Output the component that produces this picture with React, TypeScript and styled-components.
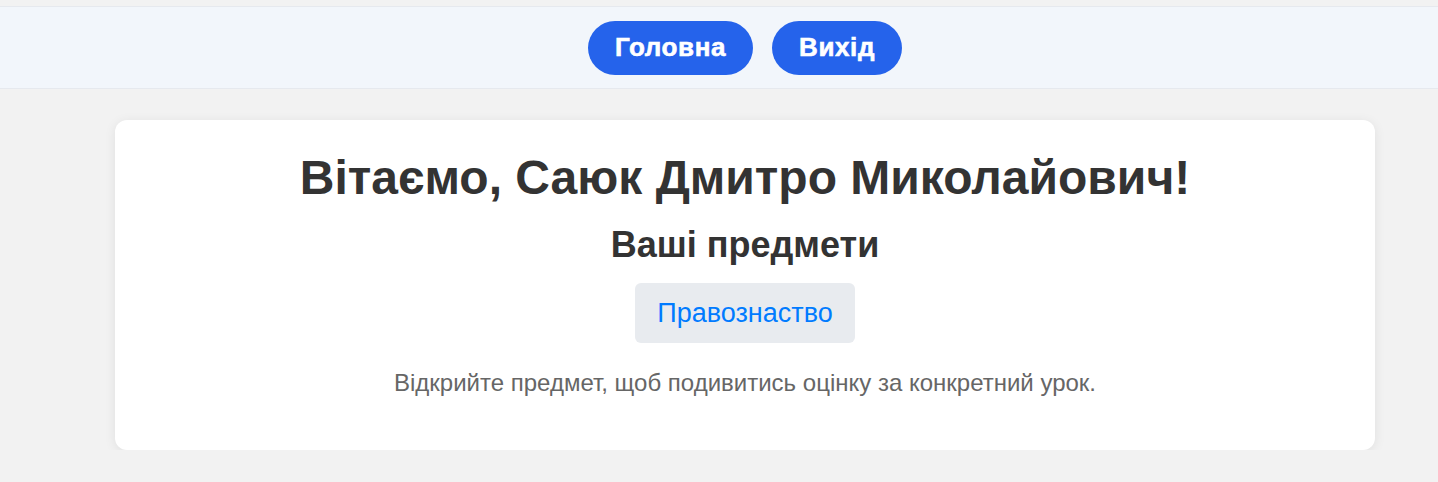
import React from "react";
import styled, { createGlobalStyle } from "styled-components";

const Global = createGlobalStyle`
  html, body { margin: 0; padding: 0; }
  body {
    background: #f2f2f2;
    font-family: "Liberation Sans", Arial, sans-serif;
    color: #333;
  }
`;

const Header = styled.header`
  margin-top: 6px;
  background: #f2f6fb;
  border-top: 1px solid #e6e9ee;
  border-bottom: 1px solid #e6e9ee;
  height: 83px;
  display: flex;
  justify-content: center;
  align-items: center;
  gap: 19px;
  box-sizing: border-box;
  padding-left: 52px;
`;

const NavButton = styled.a`
  display: inline-flex;
  align-items: center;
  justify-content: center;
  height: 54px;
  padding: 0 27px;
  border-radius: 27px;
  background: #2563eb;
  color: #fff;
  font-weight: 900;
  font-size: 26px;
  text-decoration: none;
  letter-spacing: 0.6px;
  -webkit-text-stroke: 0.6px #fff;
`;

const Main = styled.main`
  display: flex;
  justify-content: center;
  padding: 31px 0 0 52px;
`;

const Card = styled.section`
  width: 1260px;
  box-sizing: border-box;
  background: #fff;
  border-radius: 12px;
  box-shadow: 0 2px 12px rgba(0, 0, 0, 0.08);
  display: flex;
  flex-direction: column;
  align-items: center;
  padding: 30px 20px 53px;
`;

const Title = styled.h1`
  margin: 0;
  font-size: 48px;
  line-height: 55px;
  font-weight: 700;
  color: #333;
`;

const Subtitle = styled.h2`
  margin: 19px 0 0;
  font-size: 36px;
  line-height: 41px;
  font-weight: 700;
  color: #333;
`;

const SubjectLink = styled.a`
  margin-top: 18px;
  display: inline-flex;
  align-items: center;
  justify-content: center;
  height: 60px;
  padding: 0 22px;
  border-radius: 6px;
  background: #e8ebef;
  color: #007bff;
  font-size: 27px;
  text-decoration: none;
`;

const Hint = styled.p`
  margin: 26px 0 0;
  font-size: 24px;
  line-height: 28px;
  color: #666;
`;

export default function App() {
  return (
    <>
      <Global />
      <Header>
        <NavButton href="#">Головна</NavButton>
        <NavButton href="#">Вихід</NavButton>
      </Header>
      <Main>
        <Card>
          <Title>Вітаємо, Саюк Дмитро Миколайович!</Title>
          <Subtitle>Ваші предмети</Subtitle>
          <SubjectLink href="#">Правознаство</SubjectLink>
          <Hint>Відкрийте предмет, щоб подивитись оцінку за конкретний урок.</Hint>
        </Card>
      </Main>
    </>
  );
}
